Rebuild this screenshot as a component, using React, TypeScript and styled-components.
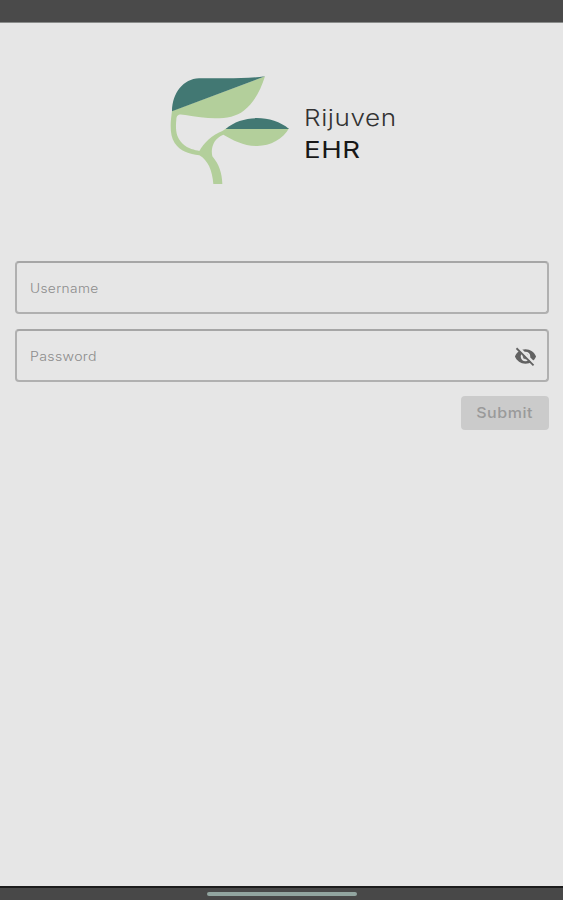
import React from "react";
import styled, { createGlobalStyle } from "styled-components";

const GlobalStyle = createGlobalStyle`
  * { box-sizing: border-box; }
  body { margin: 0; background: #e6e6e6; }
`;

const Screen = styled.div`
  display: flex;
  flex-direction: column;
  height: 900px;
  background: #e6e6e6;
  font-family: Inter, "Liberation Sans", sans-serif;
`;

const StatusBar = styled.div`
  flex: none;
  height: 23px;
  background: #4a4a4a;
  border-bottom: 1px solid #8a8c8b;
`;

const Content = styled.main`
  flex: 1;
  display: flex;
  flex-direction: column;
  padding: 42px 14px 0 15px;
`;

const Brand = styled.header`
  display: flex;
  height: 130px;
  margin-left: 145px;
`;

const BrandName = styled.div`
  padding: 37px 0 0 4px;
`;

const BrandLine = styled.div<{ $weight: number; $stretch: number; $color: string }>`
  height: 32px;
  line-height: 33px;
  font-size: 23px;
  white-space: nowrap;
  font-weight: ${(p) => p.$weight};
  letter-spacing: 0.5px;
  color: ${(p) => p.$color};
  transform: scaleX(${(p) => p.$stretch});
  transform-origin: left;
`;

const Form = styled.form`
  display: flex;
  flex-direction: column;
  gap: 15px;
  margin-top: 66px;
`;

const Field = styled.label`
  display: flex;
  align-items: center;
  justify-content: space-between;
  height: 53px;
  padding: 1px 10px 0 13px;
  border: 2px solid #b0b0b0;
  border-top-color: #a6a6a6;
  border-radius: 4px;
`;

const Input = styled.input<{ $stretch: number }>`
  width: 400px;
  padding: 0;
  border: 0;
  outline: 0;
  background: transparent;
  font: 300 12.5px Inter, "Liberation Sans", sans-serif;
  letter-spacing: 0.3px;
  color: #555;
  transform: scaleX(${(p) => p.$stretch});
  transform-origin: left;
  &::placeholder { color: #8c8c8c; opacity: 1; }
`;

const Submit = styled.button`
  align-self: flex-end;
  width: 88px;
  height: 34px;
  margin-top: -1px;
  padding: 0;
  border: 0;
  border-radius: 4px;
  background: #cbcbcb;
  color: #9a9a9a;
  font: 500 14.7px Inter, "Liberation Sans", sans-serif;
`;

const SubmitLabel = styled.span`
  display: inline-block;
  letter-spacing: 0.5px;
  transform: translateX(-0.5px) scaleX(1.09);
`;

const NavigationBar = styled.footer`
  flex: none;
  display: flex;
  justify-content: center;
  height: 14px;
  padding-top: 4px;
  border-top: 2px solid #1c1c1c;
  background: #484848;
`;

const HomeIndicator = styled.div`
  width: 150px;
  height: 4px;
  border-radius: 2px;
  background: #92a5a0;
`;

const Logo = () => (
  <svg width="140" height="130" viewBox="0 0 420 390" aria-hidden="true">
    <path
      fill="#b3cf9b"
      d="M36 138 L315 34 C302 76 281 115 251 137 C214 167 145 163 76 150 C56 146 50 149 49 163 C46 194 48 218 68 236 C84 252 105 254 118 258 C132 234 155 211 187 198 L200 190 L387 190 C370 222 331 243 292 243 C251 243 220 226 190 209 C162 220 151 247 157 274 C178 299 186 325 187 357 L160 357 C157 316 144 286 118 271 C88 267 60 259 44 234 C28 208 31 174 36 138Z"
    />
    <path fill="#427873" d="M36 139 C37 83 70 42 117 40 C181 39 246 43 315 34Z" />
    <path fill="#427873" d="M197 192 C246 148 336 149 387 192Z" />
  </svg>
);

const HiddenIcon = () => (
  <svg width="23" height="23" viewBox="0 0 24 24" aria-hidden="true">
    <path
      fill="#626262"
      fillRule="evenodd"
      d="M12 4.5C7 4.5 2.73 7.61 1 12c1.73 4.39 6 7.5 11 7.5s9.27-3.11 11-7.5c-1.73-4.39-6-7.5-11-7.5zM12 17a5 5 0 1 1 0-10 5 5 0 0 1 0 10z"
    />
    <circle cx="12" cy="12" r="2.8" fill="#777" />
    <path d="M4 2.2 22 20.2" stroke="#e6e6e6" strokeWidth="3" />
    <path d="M2.6 3.4 20.4 21.2" stroke="#626262" strokeWidth="1.9" />
  </svg>
);

export default function App() {
  return (
    <>
      <GlobalStyle />
      <Screen>
        <StatusBar />
        <Content>
          <Brand>
            <Logo />
            <BrandName>
              <BrandLine $weight={300} $stretch={1.135} $color="#333">Rijuven</BrandLine>
              <BrandLine $weight={400} $stretch={1.2} $color="#181818">EHR</BrandLine>
            </BrandName>
          </Brand>
          <Form onSubmit={(e) => e.preventDefault()}>
            <Field>
              <Input placeholder="Username" $stretch={1.1} />
            </Field>
            <Field>
              <Input type="password" placeholder="Password" $stretch={1.13} />
              <HiddenIcon />
            </Field>
            <Submit disabled>
              <SubmitLabel>Submit</SubmitLabel>
            </Submit>
          </Form>
        </Content>
        <NavigationBar>
          <HomeIndicator />
        </NavigationBar>
      </Screen>
    </>
  );
}
